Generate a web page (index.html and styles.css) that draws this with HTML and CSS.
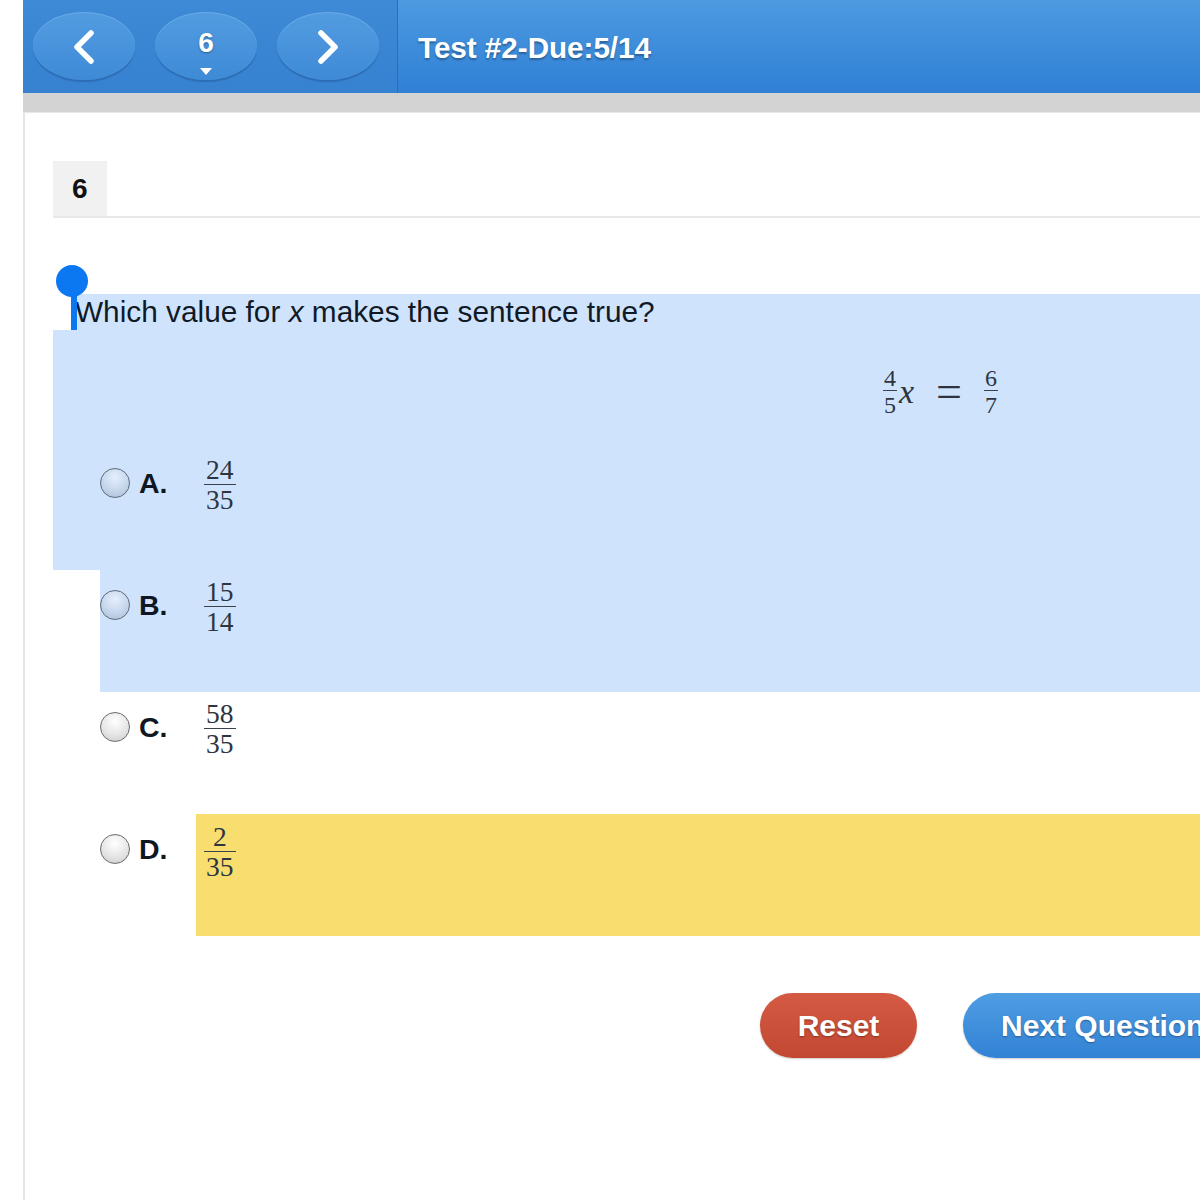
FILE: index.html
```html
<!DOCTYPE html>
<html lang="en">
<head>
<meta charset="utf-8">
<title>Test #2</title>
<link rel="stylesheet" href="styles.css">
</head>
<body>
<div class="page">
  <header class="topbar">
    <nav class="nav">
      <button class="navbtn" aria-label="Previous">
        <svg width="26" height="36" viewBox="0 0 26 36"><path d="M20 4 L6 18 L20 32" fill="none" stroke="#fff" stroke-width="5.5" stroke-linecap="round" stroke-linejoin="round"/></svg>
      </button>
      <button class="navbtn num">6<span class="caret"></span></button>
      <button class="navbtn" aria-label="Next">
        <svg width="26" height="36" viewBox="0 0 26 36"><path d="M6 4 L20 18 L6 32" fill="none" stroke="#fff" stroke-width="5.5" stroke-linecap="round" stroke-linejoin="round"/></svg>
      </button>
    </nav>
    <div class="title">Test #2-Due:5/14</div>
  </header>
  <div class="graybar"></div>
  <main class="content">
    <div class="tabs"><div class="tab">6</div></div>
    <section class="question">
      <span class="handle"><span class="knob"></span><span class="stem"></span></span>
      <p class="qline">Which value for <i>x</i> makes the sentence true?</p>
      <div class="hlblock">
        <div class="equation">
          <span class="frac small"><span class="num">4</span><span class="den">5</span></span><span class="var">x</span><span class="eq">=</span><span class="frac small"><span class="num">6</span><span class="den">7</span></span>
        </div>
        <div class="option">
          <span class="radio sel"></span>
          <span class="letter">A.</span>
          <div class="answer"><span class="frac"><span class="num">24</span><span class="den">35</span></span></div>
        </div>
      </div>
      <div class="option indent hl">
        <span class="radio sel"></span>
        <span class="letter">B.</span>
        <div class="answer"><span class="frac"><span class="num">15</span><span class="den">14</span></span></div>
      </div>
      <div class="option indent">
        <span class="radio"></span>
        <span class="letter">C.</span>
        <div class="answer"><span class="frac"><span class="num">58</span><span class="den">35</span></span></div>
      </div>
      <div class="option indent">
        <span class="radio"></span>
        <span class="letter">D.</span>
        <div class="answer yellow"><span class="frac"><span class="num">2</span><span class="den">35</span></span></div>
      </div>
    </section>
    <div class="actions">
      <button class="btn reset">Reset</button>
      <button class="btn next">Next Question</button>
    </div>
  </main>
</div>
</body>
</html>
```
FILE: styles.css
```css
html, body {
  margin: 0;
  padding: 0;
  background: #fff;
  overflow: hidden;
}
body {
  font-family: "Liberation Sans", Arial, sans-serif;
  color: #111;
}
.page {
  margin-left: 23px;
  width: 1177px;
  height: 1200px;
}
.topbar {
  display: flex;
  height: 93px;
}
.nav {
  width: 375px;
  background: linear-gradient(#3f8ad6, #3681d0);
  border-right: 1px solid #2c6db5;
  display: flex;
  align-items: center;
  gap: 20px;
  padding-left: 10px;
  box-sizing: border-box;
}
.navbtn {
  width: 102px;
  height: 68px;
  margin-top: -2px;
  border: none;
  border-radius: 50%;
  background: linear-gradient(#519ce0, #3f8ad6);
  box-shadow: 0 2px 1px #2d6cb3, inset 0 1px 0 #6aaae6;
  display: flex;
  align-items: center;
  justify-content: center;
  padding: 0;
  position: relative;
  color: #fff;
}
.navbtn svg {
  margin-top: 2px;
}
.navbtn.num {
  font-family: "Liberation Sans", Arial, sans-serif;
  font-weight: bold;
  font-size: 28px;
  text-shadow: 0 1px 2px rgba(0,0,0,0.35);
  align-items: flex-start;
  padding-top: 15px;
  box-sizing: border-box;
}
.caret {
  position: absolute;
  left: 45px;
  top: 56px;
  width: 0;
  height: 0;
  border-left: 6px solid transparent;
  border-right: 6px solid transparent;
  border-top: 7px solid #fff;
}
.title {
  flex: 1;
  background: linear-gradient(#4d9ae0, #2f80d6);
  color: #fff;
  font-weight: bold;
  font-size: 29.6px;
  line-height: 95px;
  padding-left: 20px;
  text-shadow: 0 2px 2px rgba(0,0,0,0.3);
}
.graybar {
  height: 19px;
  background: #d3d3d3;
  border-bottom: 1px solid #e8e8e8;
}
.content {
  border-left: 2px solid #e4e4e4;
  padding-left: 28px;
  height: 1090px;
}
.tabs {
  padding-top: 48px;
  border-bottom: 2px solid #e8e8e8;
}
.tab {
  width: 54px;
  height: 55px;
  background: #f1f1f1;
  font-weight: bold;
  font-size: 28px;
  line-height: 55px;
  padding-left: 19px;
  box-sizing: border-box;
  color: #111;
}
.question {
  position: relative;
  margin-top: 76px;
}
.handle {
  position: absolute;
  left: 3px;
  top: -29px;
  width: 32px;
  height: 65px;
}
.knob {
  position: absolute;
  left: 0;
  top: 0;
  width: 32px;
  height: 32px;
  border-radius: 50%;
  background: #0b78f2;
}
.stem {
  position: absolute;
  left: 15px;
  top: 16px;
  width: 6px;
  height: 49px;
  background: #0b78f2;
}
.qline {
  margin: 0 0 0 19px;
  height: 36px;
  line-height: 36px;
  padding-left: 3px;
  background: #cfe3fc;
  font-size: 29.8px;
  color: #101a26;
}
.hlblock {
  background: #cfe3fc;
}
.equation {
  height: 118px;
  padding-left: 830px;
  padding-top: 37px;
  box-sizing: border-box;
  display: flex;
  align-items: flex-start;
  font-family: "Liberation Serif", "Times New Roman", serif;
  color: #2b3440;
}
.var {
  font-style: italic;
  font-size: 34px;
  line-height: 34px;
  margin-top: 8px;
  margin-left: 2px;
}
.eq {
  font-size: 46px;
  line-height: 46px;
  margin: 2px 22px 0 22px;
}
.option {
  display: flex;
  height: 122px;
  margin-left: 47px;
}
.option.hl {
  background: #cfe3fc;
}
.radio {
  width: 28px;
  height: 28px;
  margin-top: 20px;
  border: 1.5px solid #6b6b6b;
  border-radius: 50%;
  background: radial-gradient(circle at 50% 30%, #ffffff, #e6e6e6 55%, #c8c8c8);
  flex: none;
}
.radio.sel {
  border-color: #5d6a7a;
  background: radial-gradient(circle at 50% 30%, #e4efff, #c6d6ea 55%, #a9bdd6);
}
.letter {
  font-weight: bold;
  font-size: 28.5px;
  width: 57px;
  margin-left: 9px;
  margin-top: 20px;
  line-height: 30px;
  color: #0f1722;
}
.answer {
  flex: 1;
  padding: 9px 0 0 8px;
}
.answer.yellow {
  background: #f8de6f;
  padding-top: 10px;
}
.frac {
  display: inline-flex;
  flex-direction: column;
  align-items: center;
  font-family: "Liberation Serif", "Times New Roman", serif;
  font-size: 27.5px;
  line-height: 26px;
  color: #2d3540;
}
.frac .num {
  padding: 0 2px 1px;
}
.frac .den {
  border-top: 1.5px solid #3a424c;
  padding: 2px 2px 0;
  align-self: stretch;
  text-align: center;
}
.frac.small {
  font-size: 24px;
  line-height: 22px;
}
.frac.small .num {
  padding: 0 1px 1px;
}
.frac.small .den {
  padding: 2.5px 1px 0;
}
.actions {
  display: flex;
  gap: 46px;
  margin-top: 57px;
  padding-left: 707px;
  white-space: nowrap;
}
.btn {
  height: 65px;
  border: none;
  border-radius: 33px;
  color: #fff;
  font-family: "Liberation Sans", Arial, sans-serif;
  font-weight: bold;
  font-size: 30px;
  text-shadow: 0 1px 2px rgba(0,0,0,0.35);
  flex: none;
}
.reset {
  width: 157px;
  background: linear-gradient(#d45a44, #c24832);
  box-shadow: 0 1px 2px rgba(0,0,0,0.2);
}
.next {
  width: 280px;
  text-align: left;
  padding-left: 38px;
  background: linear-gradient(#4f9de2, #3282d6);
  box-shadow: 0 1px 2px rgba(0,0,0,0.2);
}
```
